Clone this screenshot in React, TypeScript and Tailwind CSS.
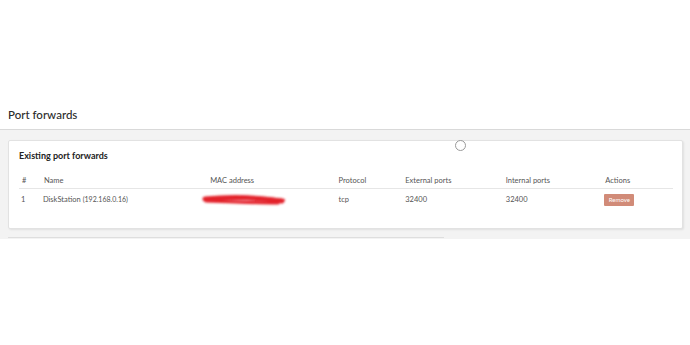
import { useState } from 'react';

interface PortForward {
  id: number;
  name: string;
  ip: string;
  protocol: string;
  externalPorts: string;
  internalPorts: string;
}

const forwards: PortForward[] = [
  {
    id: 1,
    name: 'DiskStation',
    ip: '(192.168.0.16)',
    protocol: 'tcp',
    externalPorts: '32400',
    internalPorts: '32400'
  }
];

// column widths, in px, starting at the card's inner edge
const cols = ['w-[22px]', 'w-[167px]', 'w-[129px]', 'w-[67px]', 'w-[101px]', 'w-[100px]', 'w-[71px]'];

function RedactedMac() {
  return (
    <svg width="90" height="14" viewBox="0 0 90 14" className="block">
      <defs>
        <filter id="smear" x="-10%" y="-50%" width="120%" height="200%">
          <feGaussianBlur stdDeviation="0.9" />
        </filter>
      </defs>
      <g filter="url(#smear)" stroke="#e3222b" strokeLinecap="round" fill="none">
        <path d="M5 6 C 25 4, 55 4, 82 8" strokeWidth="5" />
        <path d="M6 8 C 30 9, 60 10, 78 10" strokeWidth="3" />
        <path d="M30 4 C 50 3, 70 5, 84 7" strokeWidth="2" />
      </g>
    </svg>
  );
}

export default function App() {
  const [rows, setRows] = useState<PortForward[]>(forwards);

  return (
    <div className="w-[690px] h-[345px] bg-white overflow-hidden font-['Lato',sans-serif] text-[#333]">
      {/* Page title */}
      <div className="h-[129px] flex items-end px-[8px] pb-[6px]">
        <h1 className="text-[11.5px] leading-[16px] font-medium text-[#2b2b2b]">Port forwards</h1>
      </div>

      {/* Content band */}
      <div className="relative bg-[#f3f3f3] border-t border-[#d9d9d9] px-[8px] pt-[10px] h-[110px]">
        <div className="w-[675px] h-[89px] bg-white border border-[#e2e2e2] rounded-[2px] shadow-[1px_1px_2px_rgba(0,0,0,0.08)] pl-[10px] pr-[9px] pt-[9px]">
          <h2 className="text-[9px] leading-[12px] font-bold text-[#222]">Existing port forwards</h2>

          <div className="mt-[12px] text-[7.5px] text-[#555]">
            <div className="flex h-[15px] items-center border-b border-[#e6e6e6]">
              {['#', 'Name', 'MAC address', 'Protocol', 'External ports', 'Internal ports', 'Actions'].map((h, i) => (
                <div key={h} className={`${cols[i]} pl-[3px]`}>{h}</div>
              ))}
            </div>

            {rows.map(row => (
              <div key={row.id} className="flex h-[22px] items-center">
                <div className={`${cols[0]} pl-[2px]`}>{row.id}</div>
                <div className={`${cols[1]} pl-[2px]`}>
                  {row.name} <span className="text-[7px]">{row.ip}</span>
                </div>
                <div className={`${cols[2]} -ml-[10px] pl-[3px]`}>
                  <RedactedMac />
                </div>
                <div className={`${cols[3]} ml-[10px] pl-[3px]`}>{row.protocol}</div>
                <div className={`${cols[4]} pl-[3px]`}>{row.externalPorts}</div>
                <div className={`${cols[5]} pl-[3px]`}>{row.internalPorts}</div>
                <div className={`${cols[6]} pl-[2px]`}>
                  <button
                    onClick={() => setRows(rows.filter(r => r.id !== row.id))}
                    className="w-[30px] h-[12px] bg-[#d18b78] text-white text-[6px] leading-[12px] rounded-[1px]"
                  >
                    Remove
                  </button>
                </div>
              </div>
            ))}
          </div>
        </div>

        {/* next card edge, just peeking */}
        <div className="mt-[8px] w-[436px] h-[1px] bg-[#dedede]" />

        {/* loading ring overlay */}
        <div className="absolute left-[455px] top-[10px] w-[11px] h-[11px] rounded-full border border-[#9a9a9a] bg-white/40" />
      </div>
    </div>
  );
}
